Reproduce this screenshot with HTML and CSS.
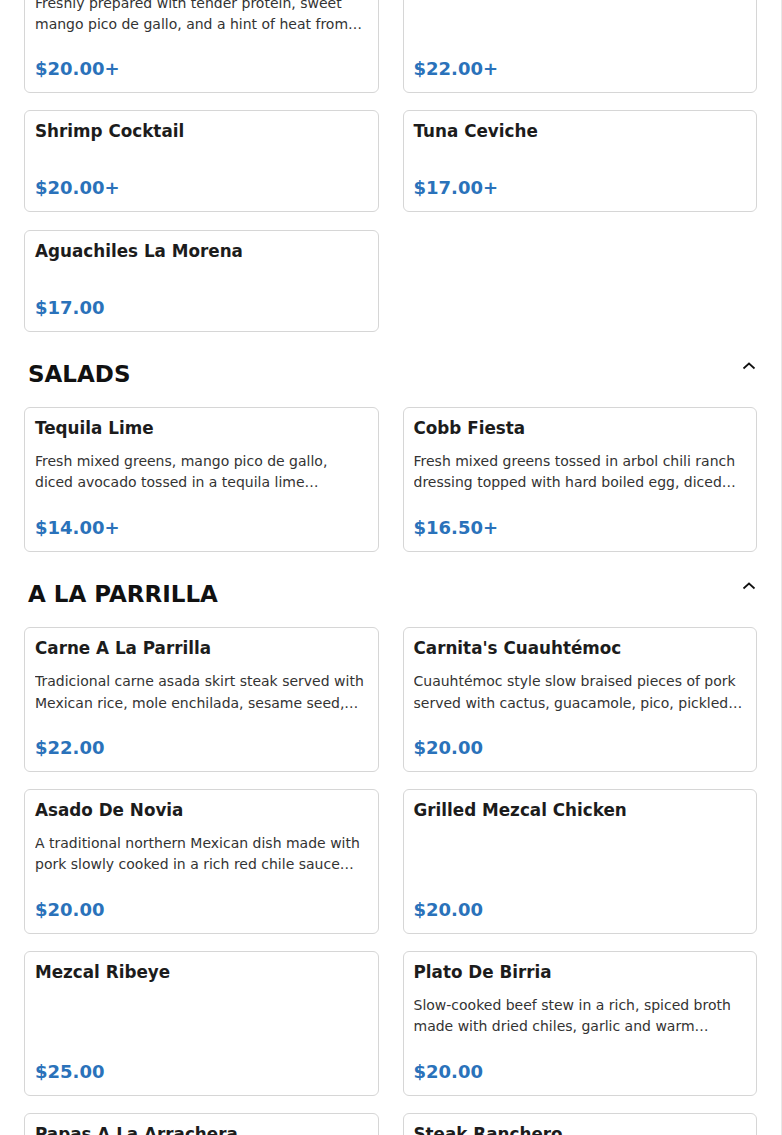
FILE: index.html
```html
<!DOCTYPE html>
<html lang="en">
<head>
    <meta charset="UTF-8">
    <meta name="viewport" content="width=device-width, initial-scale=1.0">
    <title>Menu</title>
    <link rel="stylesheet" href="styles.css">
</head>
<body>
    <div class="page">
        <section class="section first">
            <div class="grid">
                <div class="card">
                    <h3 class="item-name">Mango Ceviche</h3>
                    <p class="item-desc">Freshly prepared with tender protein, sweet mango pico de gallo, and a hint of heat from serrano peppers and fresh lime.</p>
                    <div class="price">$20.00+</div>
                </div>
                <div class="card">
                    <h3 class="item-name">Campechana</h3>
                    <p class="item-desc"></p>
                    <div class="price">$22.00+</div>
                </div>
                <div class="card">
                    <h3 class="item-name">Shrimp Cocktail</h3>
                    <p class="item-desc"></p>
                    <div class="price">$20.00+</div>
                </div>
                <div class="card">
                    <h3 class="item-name">Tuna Ceviche</h3>
                    <p class="item-desc"></p>
                    <div class="price">$17.00+</div>
                </div>
                <div class="card">
                    <h3 class="item-name">Aguachiles La Morena</h3>
                    <p class="item-desc"></p>
                    <div class="price">$17.00</div>
                </div>
            </div>
        </section>

        <section class="section">
            <div class="section-header">
                <h2>SALADS</h2>
                <svg class="chevron" width="16" height="16" viewBox="0 0 16 16"><polyline points="2.5,10.5 8,5.5 13.5,10.5" fill="none" stroke="#111" stroke-width="1.7"/></svg>
            </div>
            <div class="grid">
                <div class="card">
                    <h3 class="item-name">Tequila Lime</h3>
                    <p class="item-desc">Fresh mixed greens, mango pico de gallo, diced avocado tossed in a tequila lime vinaigrette, topped with tortilla strips.</p>
                    <div class="price">$14.00+</div>
                </div>
                <div class="card">
                    <h3 class="item-name">Cobb Fiesta</h3>
                    <p class="item-desc">Fresh mixed greens tossed in arbol chili ranch dressing topped with hard boiled egg, diced tomato, bacon and avocado.</p>
                    <div class="price">$16.50+</div>
                </div>
            </div>
        </section>

        <section class="section">
            <div class="section-header">
                <h2>A LA PARRILLA</h2>
                <svg class="chevron" width="16" height="16" viewBox="0 0 16 16"><polyline points="2.5,10.5 8,5.5 13.5,10.5" fill="none" stroke="#111" stroke-width="1.7"/></svg>
            </div>
            <div class="grid">
                <div class="card">
                    <h3 class="item-name">Carne A La Parrilla</h3>
                    <p class="item-desc">Tradicional carne asada skirt steak served with Mexican rice, mole enchilada, sesame seed, refried beans and grilled onion.</p>
                    <div class="price">$22.00</div>
                </div>
                <div class="card">
                    <h3 class="item-name">Carnita's Cuauhtémoc</h3>
                    <p class="item-desc">Cuauhtémoc style slow braised pieces of pork served with cactus, guacamole, pico, pickled onions and handmade tortillas.</p>
                    <div class="price">$20.00</div>
                </div>
                <div class="card">
                    <h3 class="item-name">Asado De Novia</h3>
                    <p class="item-desc">A traditional northern Mexican dish made with pork slowly cooked in a rich red chile sauce served with rice and beans.</p>
                    <div class="price">$20.00</div>
                </div>
                <div class="card">
                    <h3 class="item-name">Grilled Mezcal Chicken</h3>
                    <p class="item-desc"></p>
                    <div class="price">$20.00</div>
                </div>
                <div class="card">
                    <h3 class="item-name">Mezcal Ribeye</h3>
                    <p class="item-desc"></p>
                    <div class="price">$25.00</div>
                </div>
                <div class="card">
                    <h3 class="item-name">Plato De Birria</h3>
                    <p class="item-desc">Slow-cooked beef stew in a rich, spiced broth made with dried chiles, garlic and warm spices, served with consommé.</p>
                    <div class="price">$20.00</div>
                </div>
                <div class="card">
                    <h3 class="item-name">Papas A La Arrachera</h3>
                    <p class="item-desc">Crispy potatoes topped with grilled arrachera steak, melted cheese, pico de gallo and sour cream.</p>
                    <div class="price">$19.00</div>
                </div>
                <div class="card">
                    <h3 class="item-name">Steak Ranchero</h3>
                    <p class="item-desc">Grilled steak smothered in a house ranchero sauce with peppers and onions, served with rice and beans.</p>
                    <div class="price">$21.00</div>
                </div>
            </div>
        </section>
    </div>
</body>
</html>
```

FILE: styles.css
```css
* {
    box-sizing: border-box;
}
body {
    margin: 0;
    background: #fff;
    font-family: "DejaVu Sans", Verdana, sans-serif;
    color: #1c1c1c;
}
.page {
    width: 782px;
    padding: 0 24px 40px;
    border-right: 1px solid #e8e8e8;
}
.section.first {
    margin-top: -51.5px;
}
.section-header {
    display: flex;
    justify-content: space-between;
    align-items: flex-start;
    padding: 0 0 0 4px;
    margin: 28.5px 0 19px;
}
.section-header h2 {
    margin: 0;
    font-size: 23px;
    line-height: 28px;
    font-weight: bold;
    color: #111;
}
.chevron {
    display: block;
    margin-top: -2px;
}
.grid {
    display: grid;
    grid-template-columns: 1fr 1fr;
    gap: 17.2px 24px;
}
.card {
    display: flex;
    flex-direction: column;
    border: 1px solid #d6d6d6;
    border-radius: 6px;
    padding: 10px 10px 12px;
    background: #fff;
}
.item-name {
    margin: 0;
    font-size: 16.8px;
    line-height: 20px;
    font-weight: bold;
    color: #1c1c1c;
}
.item-desc {
    flex: 1;
    margin: 13px 0 0;
    font-size: 14px;
    line-height: 21.33px;
    color: #333;
    display: -webkit-box;
    -webkit-line-clamp: 2;
    -webkit-box-orient: vertical;
    overflow: hidden;
}
.price {
    margin-top: 23px;
    font-size: 18px;
    line-height: 22px;
    font-weight: bold;
    color: #2a72ba;
}
```
